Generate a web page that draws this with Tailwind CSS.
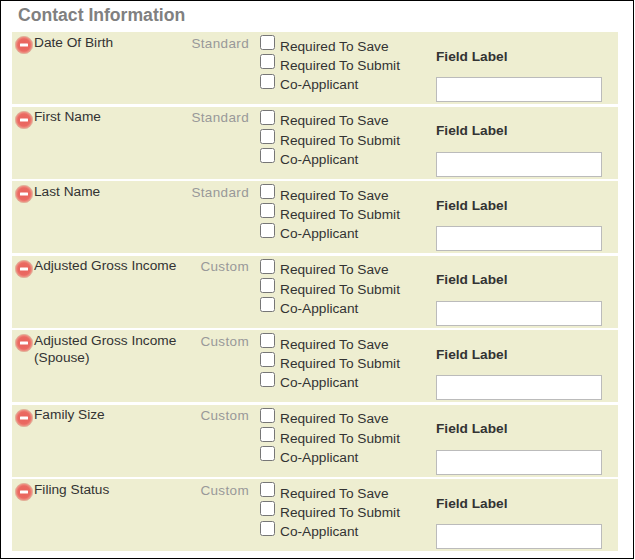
<!DOCTYPE html>
<html lang="en">
<head>
<meta charset="UTF-8">
<title>Contact Information</title>
<script src="https://cdn.jsdelivr.net/npm/@tailwindcss/browser@4"></script>
</head>
<body class="bg-white">
<div id="box" class="w-[634px] h-[559px] border border-black bg-white pl-[11px] font-['Liberation_Sans',Arial,sans-serif] text-[13.7px] text-[#333] overflow-hidden">
    <h2 class="h-[31px] pl-[6px] pt-[4px] text-[17.6px] leading-[21px] font-bold text-[#808080]">Contact Information</h2>
    <div id="rows" class="w-[606px] flex flex-col gap-[2.5px]"></div>
</div>
<template id="rowTpl">
    <div class="h-[72px] bg-[#eeeed1] flex items-start">
        <svg class="mt-[4px] ml-[3px] w-[18px] h-[18px] shrink-0" viewBox="0 0 18 18">
            <defs>
                <radialGradient id="red" cx="0.5" cy="0.5" r="0.5">
                    <stop offset="0" stop-color="#e9615b"/>
                    <stop offset="0.7" stop-color="#ea6a62"/>
                    <stop offset="1" stop-color="#f0a494"/>
                </radialGradient>
            </defs>
            <circle cx="9" cy="9" r="8.7" fill="url(#red)" stroke="#d9a88f" stroke-width="0.6"/>
            <rect x="5" y="7.5" width="8" height="3" rx="0.5" fill="#fff"/>
        </svg>
        <div class="name w-[150px] shrink-0 ml-[1px] pt-[1.9px] leading-[17px]"></div>
        <div class="type w-[65px] shrink-0 pt-[2.9px] text-right text-[#999] text-[13.5px] tracking-[0.35px] leading-[17px]"></div>
        <div class="w-[176px] shrink-0 ml-[11px] pt-[2px] flex flex-col">
            <label class="h-[19.3px] flex items-start gap-[5px]"><input type="checkbox" class="w-[15px] h-[15px] m-0 mt-[1px] shrink-0"><span class="leading-[16px] mt-[4.7px]">Required To Save</span></label>
            <label class="h-[19.3px] flex items-start gap-[5px]"><input type="checkbox" class="w-[15px] h-[15px] m-0 mt-[1px] shrink-0"><span class="leading-[16px] mt-[5.2px]">Required To Submit</span></label>
            <label class="h-[19.3px] flex items-start gap-[5px]"><input type="checkbox" class="w-[15px] h-[15px] m-0 mt-[1px] shrink-0"><span class="leading-[16px] mt-[4.9px]">Co-Applicant</span></label>
        </div>
        <div class="flex flex-col">
            <div class="mt-[15.9px] leading-[17px] font-bold">Field Label</div>
            <input type="text" class="mt-[12.2px] w-[166px] h-[25px] bg-white border border-[#bbb]">
        </div>
    </div>
</template>
<script>
    const fields = [
        ['Date Of Birth', 'Standard'],
        ['First Name', 'Standard'],
        ['Last Name', 'Standard'],
        ['Adjusted Gross Income', 'Custom'],
        ['Adjusted Gross Income (Spouse)', 'Custom'],
        ['Family Size', 'Custom'],
        ['Filing Status', 'Custom']
    ];
    const rows = document.getElementById('rows');
    const tpl = document.getElementById('rowTpl');
    fields.forEach(f => {
        const row = tpl.content.cloneNode(true);
        row.querySelector('.name').textContent = f[0];
        row.querySelector('.type').textContent = f[1];
        rows.appendChild(row);
    });
</script>
</body>
</html>
